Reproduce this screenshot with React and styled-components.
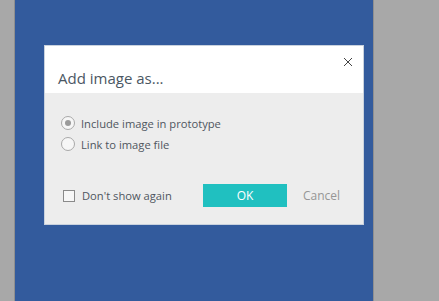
import styled, { createGlobalStyle } from 'styled-components';

const Global = createGlobalStyle`
  html, body {
    margin: 0;
    padding: 0;
    height: 100%;
    background: #a8a8a8;
    font-family: 'Open Sans', 'Liberation Sans', sans-serif;
  }
  #root { height: 100%; }
`;

const Page = styled.div`
  height: 301px;
  padding-left: 14px;
  display: flex;
`;

const Canvas = styled.div`
  width: 360px;
  height: 100%;
  background: #335b9d;
  border-left: 1px solid #8f8f8f;
  border-right: 1px solid #8f8f8f;
  padding: 45px 0 0 29px;
  box-sizing: border-box;
`;

const Dialog = styled.div`
  width: 320px;
  height: 180px;
  box-sizing: border-box;
  border: 1px solid #c9d2de;
  background: #ededed;
  display: flex;
  flex-direction: column;
`;

const Header = styled.div`
  height: 47px;
  background: #fff;
  display: flex;
  align-items: flex-end;
  padding: 0 10px 5px 13px;
  box-sizing: border-box;
  position: relative;
`;

const Title = styled.h2`
  margin: 0;
  font-size: 15px;
  font-weight: 400;
  color: #4b5763;
  line-height: 20px;
`;

const Close = styled.button`
  position: absolute;
  top: 11px;
  right: 10px;
  width: 10px;
  height: 10px;
  padding: 0;
  border: none;
  background: none;
  display: flex;
`;

const Body = styled.div`
  flex: 1;
  padding: 23px 18px 0 16px;
  display: flex;
  flex-direction: column;
`;

const Options = styled.div`
  display: flex;
  flex-direction: column;
  gap: 7px;
`;

const Option = styled.label`
  display: flex;
  align-items: center;
  gap: 6px;
  font-size: 11.2px;
  color: #4f5660;
  height: 14px;
`;

const Radio = styled.span`
  width: 12px;
  height: 12px;
  border-radius: 50%;
  border: 1px solid #a9a9a9;
  background: #f6f6f6;
  display: flex;
  align-items: center;
  justify-content: center;
  &::after {
    content: '';
    width: 6px;
    height: 6px;
    border-radius: 50%;
    background: ${p => (p.$checked ? '#9a9a9a' : 'transparent')};
  }
`;

const Footer = styled.div`
  margin-top: 33px;
  display: flex;
  align-items: center;
`;

const Check = styled.label`
  display: flex;
  align-items: center;
  gap: 7px;
  font-size: 11.2px;
  color: #4f5660;
  width: 140px;
  padding-left: 2px;
`;

const Box = styled.span`
  width: 10px;
  height: 10px;
  border: 1px solid #8a8a8a;
  background: #f7f7f7;
`;

const Ok = styled.button`
  width: 84px;
  height: 23px;
  border: none;
  background: #20c0c0;
  color: #fff;
  font-family: inherit;
  font-size: 12px;
  padding: 0;
`;

const Cancel = styled.button`
  margin-left: 16px;
  border: none;
  background: none;
  padding: 0;
  color: #969696;
  font-family: inherit;
  font-size: 12px;
`;

export default function App() {
  return (
    <>
      <Global />
      <Page>
        <Canvas>
          <Dialog>
            <Header>
              <Title>Add image as...</Title>
              <Close aria-label="Close">
                <svg width="10" height="10" viewBox="0 0 10 10">
                  <path d="M1 1L9 9M9 1L1 9" stroke="#444" strokeWidth="1" />
                </svg>
              </Close>
            </Header>
            <Body>
              <Options>
                <Option>
                  <Radio $checked />
                  Include image in prototype
                </Option>
                <Option>
                  <Radio />
                  Link to image file
                </Option>
              </Options>
              <Footer>
                <Check>
                  <Box />
                  Don't show again
                </Check>
                <Ok>OK</Ok>
                <Cancel>Cancel</Cancel>
              </Footer>
            </Body>
          </Dialog>
        </Canvas>
      </Page>
    </>
  );
}
